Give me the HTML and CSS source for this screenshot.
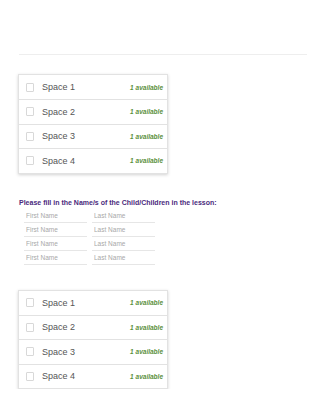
FILE: index.html
```html
<!DOCTYPE html>
<html>

<head>
	<title>Book a space</title>
	<link rel="stylesheet" href="styles.css">
</head>

<body>
	<div class="container">
		<div class="rule"></div>

		<div class="spaces">
			<label class="space"><span class="box"></span><span class="name">Space 1</span><span class="avail">1 available</span></label>
			<label class="space"><span class="box"></span><span class="name">Space 2</span><span class="avail">1 available</span></label>
			<label class="space"><span class="box"></span><span class="name">Space 3</span><span class="avail">1 available</span></label>
			<label class="space"><span class="box"></span><span class="name">Space 4</span><span class="avail">1 available</span></label>
		</div>

		<h3 class="children">Please fill in the Name/s of the Child/Children in the lesson:</h3>
		<div class="names">
			<div class="name-row"><input placeholder="First Name"><input placeholder="Last Name"></div>
			<div class="name-row"><input placeholder="First Name"><input placeholder="Last Name"></div>
			<div class="name-row"><input placeholder="First Name"><input placeholder="Last Name"></div>
			<div class="name-row"><input placeholder="First Name"><input placeholder="Last Name"></div>
		</div>

		<div class="spaces second">
			<label class="space"><span class="box"></span><span class="name">Space 1</span><span class="avail">1 available</span></label>
			<label class="space"><span class="box"></span><span class="name">Space 2</span><span class="avail">1 available</span></label>
			<label class="space"><span class="box"></span><span class="name">Space 3</span><span class="avail">1 available</span></label>
			<label class="space"><span class="box"></span><span class="name">Space 4</span><span class="avail">1 available</span></label>
		</div>
	</div>
</body>

</html>
```

FILE: styles.css
```css
body {
	margin: 0;
	background-color: white;
	font-family: 'Liberation Sans', Arial, sans-serif;
}

.container {
	padding: 54px 18px 0 18px;
}

.rule {
	height: 1px;
	background-color: #eeeeee;
	margin-left: 1px;
	width: 288px;
}

.spaces {
	width: 148px;
	margin-top: 19px;
	border: 1px solid #e2e2e2;
	box-shadow: 0 1px 3px rgba(0, 0, 0, 0.18);
}

.spaces.second {
	margin-top: 25px;
}

.space {
	display: flex;
	align-items: center;
	height: 23.5px;
	padding: 0 4px 0 7px;
	border-top: 1px solid #e2e2e2;
}

.space:first-child {
	border-top: 0;
	height: 24px;
}

.box {
	width: 6px;
	height: 7px;
	border: 1px solid #d8d8d8;
	border-radius: 1px;
}

.name {
	margin-left: 8px;
	font-size: 9px;
	color: #555555;
	flex: 1;
}

.avail {
	font-size: 6.5px;
	font-weight: bold;
	font-style: italic;
	color: #5a8f3c;
}

.children {
	margin: 25px 0 0 1px;
	font-size: 7px;
	font-weight: bold;
	color: #4a2a7c;
}

.names {
	margin-top: 3px;
	padding-left: 6px;
}

.name-row {
	display: flex;
	gap: 5px;
	height: 14px;
}

.name-row input {
	box-sizing: border-box;
	width: 63px;
	height: 14px;
	padding: 0 2px;
	border: 0;
	border-bottom: 1px solid #e6e6e6;
	font-family: 'Liberation Sans', Arial, sans-serif;
	font-size: 6.5px;
	color: #555555;
	outline: none;
}

.name-row input::placeholder {
	color: #a8a8a8;
}
```
